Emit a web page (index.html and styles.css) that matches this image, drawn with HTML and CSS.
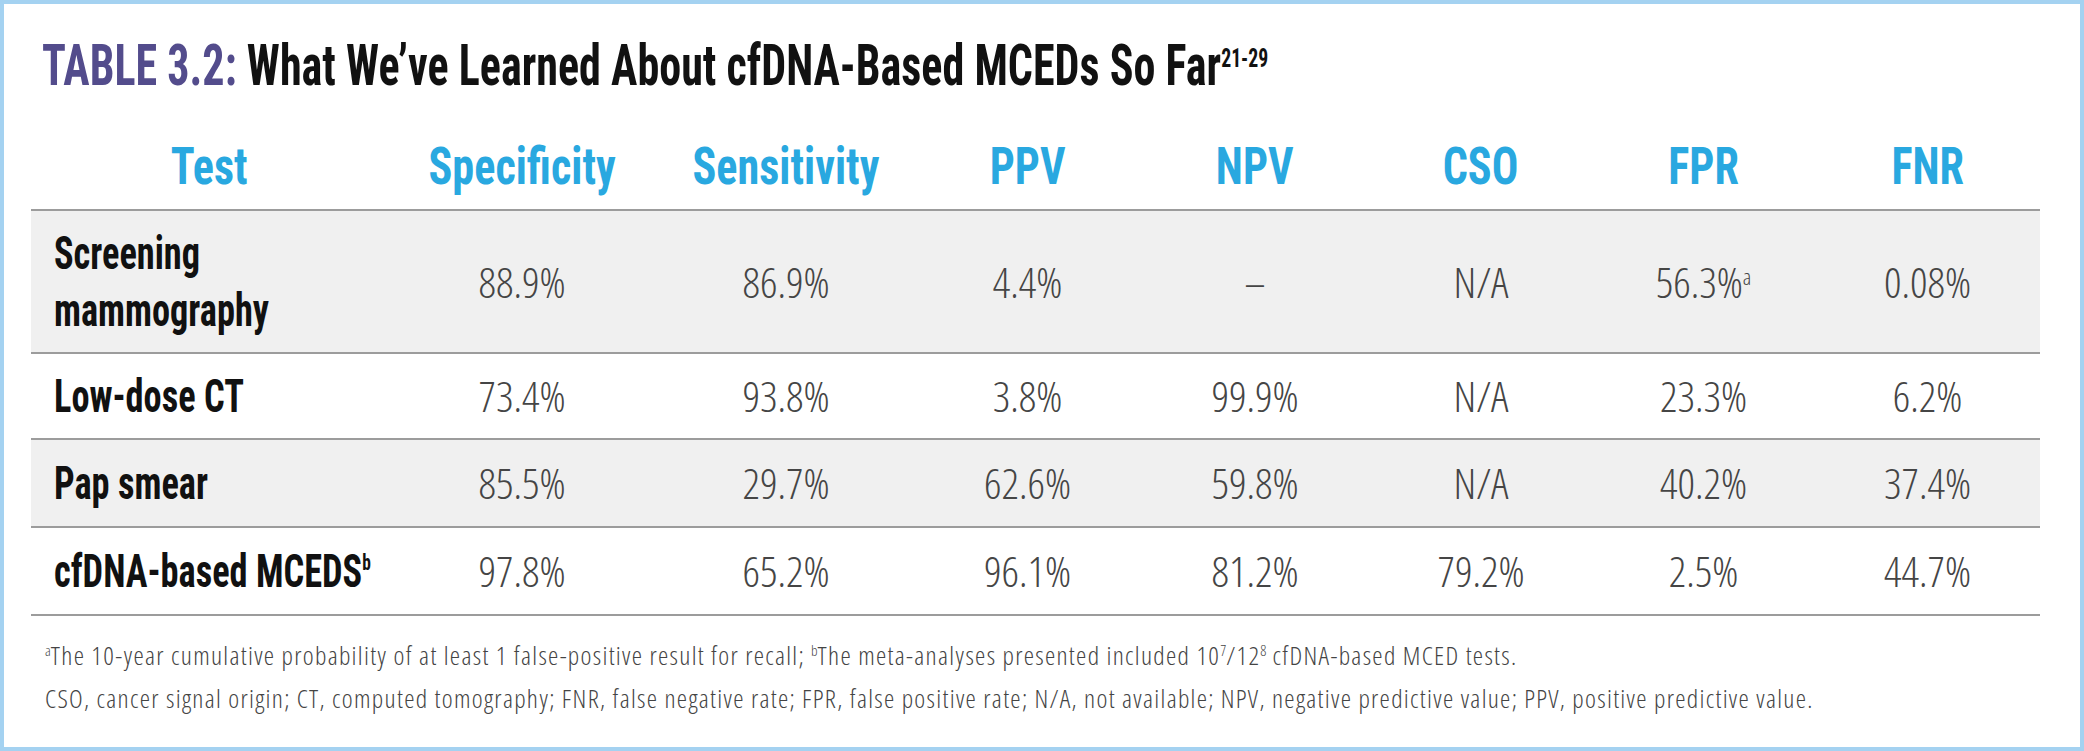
FILE: index.html
```html
<!DOCTYPE html>
<html lang="en">
<head>
<meta charset="utf-8">
<title>Table 3.2</title>
<link rel="stylesheet" href="styles.css">
</head>
<body>
<div class="frame">
  <h1 class="title"><span class="title-num">TABLE 3.2:</span> What We’ve Learned About cfDNA-Based MCEDs So Far<sup class="title-ref">21-29</sup></h1>
  <div class="table">
    <div class="row head">
      <div class="cell"><span class="sq">Test</span></div>
      <div class="cell"><span class="sq">Specificity</span></div>
      <div class="cell"><span class="sq">Sensitivity</span></div>
      <div class="cell"><span class="sq">PPV</span></div>
      <div class="cell"><span class="sq">NPV</span></div>
      <div class="cell"><span class="sq">CSO</span></div>
      <div class="cell"><span class="sq">FPR</span></div>
      <div class="cell"><span class="sq">FNR</span></div>
    </div>
    <div class="row shade tall">
      <div class="cell label"><span class="sq">Screening<br>mammography</span></div>
      <div class="cell">88.9%</div>
      <div class="cell">86.9%</div>
      <div class="cell">4.4%</div>
      <div class="cell">–</div>
      <div class="cell">N/A</div>
      <div class="cell">56.3%<sup class="note">a</sup></div>
      <div class="cell">0.08%</div>
    </div>
    <div class="row">
      <div class="cell label"><span class="sq">Low-dose CT</span></div>
      <div class="cell">73.4%</div>
      <div class="cell">93.8%</div>
      <div class="cell">3.8%</div>
      <div class="cell">99.9%</div>
      <div class="cell">N/A</div>
      <div class="cell">23.3%</div>
      <div class="cell">6.2%</div>
    </div>
    <div class="row shade">
      <div class="cell label"><span class="sq">Pap smear</span></div>
      <div class="cell">85.5%</div>
      <div class="cell">29.7%</div>
      <div class="cell">62.6%</div>
      <div class="cell">59.8%</div>
      <div class="cell">N/A</div>
      <div class="cell">40.2%</div>
      <div class="cell">37.4%</div>
    </div>
    <div class="row last">
      <div class="cell label"><span class="sq">cfDNA-based MCEDS<sup class="lnote">b</sup></span></div>
      <div class="cell">97.8%</div>
      <div class="cell">65.2%</div>
      <div class="cell">96.1%</div>
      <div class="cell">81.2%</div>
      <div class="cell">79.2%</div>
      <div class="cell">2.5%</div>
      <div class="cell">44.7%</div>
    </div>
  </div>
  <p class="foot"><sup class="fn">a</sup>The 10-year cumulative probability of at least 1 false-positive result for recall; <sup class="fn">b</sup>The meta-analyses presented included 10<sup class="fn">7</sup>/12<sup class="fn">8</sup> cfDNA-based MCED tests.</p>
  <p class="foot">CSO, cancer signal origin; CT, computed tomography; FNR, false negative rate; FPR, false positive rate; N/A, not available; NPV, negative predictive value; PPV, positive predictive value.</p>
</div>
</body>
</html>
```
FILE: styles.css
```css
html, body {
  margin: 0;
  padding: 0;
  background: #ffffff;
}

.frame {
  box-sizing: border-box;
  width: 2084px;
  height: 751px;
  border: 4px solid #a4d2f1;
  padding: 26px 0 0 27px;
  background: #ffffff;
}

.title {
  margin: 0 0 37px 11px;
  font-family: "Roboto", "Liberation Sans", sans-serif;
  font-stretch: 75%;
  font-weight: 700;
  font-size: 58px;
  line-height: 70px;
  color: #111111;
  white-space: nowrap;
  transform: scaleX(0.76);
  transform-origin: left center;
}

.title-num {
  color: #534c8c;
}

.title-ref {
  font-size: 26px;
  vertical-align: 18px;
  line-height: 0;
}

.table {
  width: 2009px;
  border-bottom: 2px solid #9c9c9c;
}

.row {
  display: grid;
  grid-template-columns: 356px 270px 258px 225px 230px 222px 223px 225px;
  align-items: center;
  box-sizing: border-box;
  height: 86px;
  border-top: 2px solid #9c9c9c;
  font-family: "Open Sans", "Liberation Sans", sans-serif;
  font-stretch: 75%;
  font-weight: 300;
  font-size: 43px;
  line-height: 50px;
  color: #454545;
}

.row.head {
  height: auto;
  border-top: 0;
  padding-bottom: 12px;
  font-family: "Roboto", "Liberation Sans", sans-serif;
  font-weight: 700;
  font-size: 52px;
  line-height: 60px;
  color: #29a8e0;
}

.row.shade {
  background: #f0f0f0;
  height: 88px;
}

.row.tall {
  height: 143px;
}

.row.last {
  height: 88px;
}

.cell {
  text-align: center;
  white-space: nowrap;
}

.sq {
  display: inline-block;
  transform: scaleX(0.85);
}

.cell.label {
  text-align: left;
  padding-left: 23px;
  font-family: "Roboto", "Liberation Sans", sans-serif;
  font-weight: 700;
  font-size: 46px;
  line-height: 57px;
  color: #111111;
}

.cell.label .sq {
  transform: scaleX(0.79);
  transform-origin: left center;
}

.note {
  font-size: 22px;
  vertical-align: 13px;
  line-height: 0;
}

.lnote {
  font-size: 22px;
  vertical-align: 17px;
  line-height: 0;
}

.foot {
  margin: 0 0 0 14px;
  font-family: "Open Sans", "Liberation Sans", sans-serif;
  font-stretch: 75%;
  font-weight: 300;
  font-size: 26px;
  letter-spacing: 1.3px;
  line-height: 43px;
  color: #444444;
  white-space: nowrap;
}

.table + .foot {
  margin-top: 18px;
}

.fn {
  font-size: 15px;
  vertical-align: 9px;
  line-height: 0;
  letter-spacing: 0;
}
```
